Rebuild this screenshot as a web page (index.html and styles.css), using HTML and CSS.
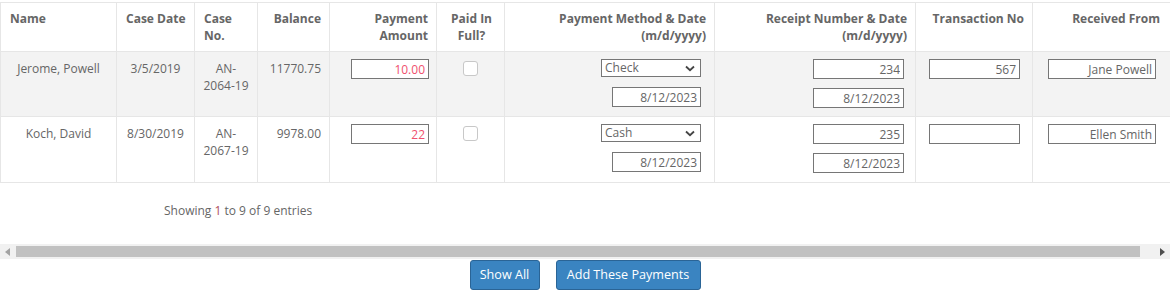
FILE: index.html
```html
<!DOCTYPE html>
<html>
<head>
<meta charset="utf-8">
<link rel="stylesheet" href="styles.css">
</head>
<body>
<div class="page">
  <div class="scroller">
    <table class="grid">
      <colgroup>
        <col class="c-name"><col class="c-date"><col class="c-case"><col class="c-bal"><col class="c-amt"><col class="c-full"><col class="c-method"><col class="c-receipt"><col class="c-trans"><col class="c-from">
      </colgroup>
      <thead>
        <tr>
          <th class="left">Name</th>
          <th class="left">Case Date</th>
          <th class="left">Case<br>No.</th>
          <th class="right">Balance</th>
          <th class="right">Payment<br>Amount</th>
          <th class="center">Paid In<br>Full?</th>
          <th class="right">Payment Method &amp; Date<br>(m/d/yyyy)</th>
          <th class="right">Receipt Number &amp; Date<br>(m/d/yyyy)</th>
          <th class="right">Transaction No</th>
          <th class="right from-h">Received From</th>
        </tr>
      </thead>
      <tbody>
        <tr class="odd">
          <td class="center">Jerome, Powell</td>
          <td class="center">3/5/2019</td>
          <td class="center">AN-<br>2064-19</td>
          <td class="right">11770.75</td>
          <td class="amt-cell"><input class="field amt" value="10.00"></td>
          <td class="center"><span class="check"></span></td>
          <td class="method-cell">
            <div class="sel"><span>Check</span><svg width="10" height="7" viewBox="0 0 10 7"><path d="M1 1.5 L5 5.2 L9 1.5" fill="none" stroke="#444" stroke-width="1.8"/></svg></div>
            <input class="field mdate" value="8/12/2023">
          </td>
          <td class="receipt-cell">
            <input class="field rnum" value="234">
            <input class="field rdate" value="8/12/2023">
          </td>
          <td class="trans-cell"><input class="field trans" value="567"></td>
          <td class="from-cell"><input class="field from" value="Jane Powell"></td>
        </tr>
        <tr class="even">
          <td class="center">Koch, David</td>
          <td class="center">8/30/2019</td>
          <td class="center">AN-<br>2067-19</td>
          <td class="right">9978.00</td>
          <td class="amt-cell"><input class="field amt" value="22"></td>
          <td class="center"><span class="check"></span></td>
          <td class="method-cell">
            <div class="sel"><span>Cash</span><svg width="10" height="7" viewBox="0 0 10 7"><path d="M1 1.5 L5 5.2 L9 1.5" fill="none" stroke="#444" stroke-width="1.8"/></svg></div>
            <input class="field mdate" value="8/12/2023">
          </td>
          <td class="receipt-cell">
            <input class="field rnum" value="235">
            <input class="field rdate" value="8/12/2023">
          </td>
          <td class="trans-cell"><input class="field trans" value=""></td>
          <td class="from-cell"><input class="field from" value="Ellen Smith"></td>
        </tr>
      </tbody>
    </table>
  </div>
  <div class="info">Showing <span class="num">1</span> to 9 of 9 entries</div>
  <div class="hscroll">
    <div class="arrow"><svg width="5" height="8" viewBox="0 0 5 8"><path d="M5 0 L0 4 L5 8Z" fill="#a3a3a3"/></svg></div>
    <div class="track"><div class="thumb"></div></div>
    <div class="arrow"><svg width="5" height="8" viewBox="0 0 5 8"><path d="M0 0 L5 4 L0 8Z" fill="#505050"/></svg></div>
  </div>
  <div class="actions">
    <button class="btn show">Show All</button>
    <button class="btn add">Add These Payments</button>
  </div>
</div>
</body>
</html>
```
FILE: styles.css
```css
html, body {
  margin: 0;
  padding: 0;
  background: #fff;
}
body {
  font-family: "Open Sans", "Liberation Sans", sans-serif;
  font-size: 12px;
  color: #666;
}
.page {
  width: 1170px;
  padding-top: 2px;
}
.scroller {
  width: 1170px;
  overflow: hidden;
}
.grid {
  border-collapse: collapse;
  table-layout: fixed;
  width: 1186px;
}
.c-name { width: 116px; }
.c-date { width: 78px; }
.c-case { width: 63px; }
.c-bal { width: 72px; }
.c-amt { width: 107px; }
.c-full { width: 68px; }
.c-method { width: 210px; }
.c-receipt { width: 201px; }
.c-trans { width: 117px; }
.c-from { width: 154px; }

.grid th, .grid td {
  border: 1px solid #e6e6e6;
  vertical-align: top;
  line-height: 17px;
  padding: 7px 8px;
}
.grid th {
  font-weight: 700;
  color: #666;
  padding: 7px 7px 7px 9px;
  height: 34px;
  background: #fff;
}
.grid td {
  padding: 8px 8px 0 8px;
}
.grid tbody tr.odd td { background: #f3f3f3; height: 56px; }
.grid tbody tr.even td { background: #fff; height: 57px; }

.left { text-align: left; }
.right { text-align: right; }
.center { text-align: center; }
.grid th.right { padding-right: 8px; }
.grid th.from-h { padding-right: 26px; }

.field {
  display: block;
  box-sizing: border-box;
  height: 20px;
  margin: 0 0 0 auto;
  padding: 0 3px;
  border: 1px solid #767676;
  border-radius: 0;
  background: #fff;
  font-family: "Open Sans", "Liberation Sans", sans-serif;
  font-size: 12px;
  color: #666;
  text-align: right;
  outline: none;
}
.grid td.amt-cell,
.grid td.method-cell,
.grid td.receipt-cell,
.grid td.trans-cell,
.grid td.from-cell { padding-top: 7px; }
.amt { width: 78px; color: #f0506e; }
.grid td.amt-cell { padding-right: 7px; }
.grid td.method-cell { padding-right: 13px; }
.grid td.receipt-cell { padding-right: 11px; }
.grid td.trans-cell { padding-right: 12px; }
.grid td.from-cell { padding-right: 30px; }

.sel {
  box-sizing: border-box;
  width: 100px;
  height: 18px;
  margin-left: auto;
  border: 1px solid #767676;
  background: #fff;
  display: flex;
  align-items: center;
  justify-content: space-between;
  padding: 0 5px 0 3px;
  color: #666;
  line-height: 16px;
  text-align: left;
}
.sel svg { display: block; }
.mdate { width: 89px; margin-top: 10px; }
.rnum { width: 91px; }
.rdate { width: 91px; margin-top: 9px; }
.trans { width: 91px; }
.from { width: 108px; }

.check {
  display: inline-block;
  box-sizing: border-box;
  width: 15px;
  height: 15px;
  margin-top: 1px;
  border: 1px solid #c8c8c8;
  border-radius: 3px;
  background: #fff;
  vertical-align: top;
}

.info {
  padding: 19px 0 0 164px;
  line-height: 17px;
  height: 17px;
  color: #666;
}
.info .num { color: #b0505a; }

.hscroll {
  margin-top: 25px;
  height: 15px;
  background: #f1f1f1;
  display: flex;
  align-items: center;
}
.arrow {
  width: 15px;
  height: 15px;
  display: flex;
  align-items: center;
  justify-content: center;
}
.track {
  flex: 1;
  height: 15px;
  display: flex;
  align-items: center;
}
.thumb {
  margin-left: 1px;
  width: 1124px;
  height: 11px;
  background: #c1c1c1;
}

.actions {
  display: flex;
  justify-content: center;
  gap: 16px;
  padding-top: 1px;
}
.btn {
  box-sizing: border-box;
  height: 30px;
  padding: 0;
  border: 1px solid #2a6496;
  border-radius: 3px;
  background: #3a84c1;
  color: #fff;
  font-family: "Open Sans", "Liberation Sans", sans-serif;
  font-size: 12.6px;
  line-height: 28px;
  white-space: nowrap;
  text-align: center;
}
.show { width: 70px; }
.add { width: 145px; }
```
